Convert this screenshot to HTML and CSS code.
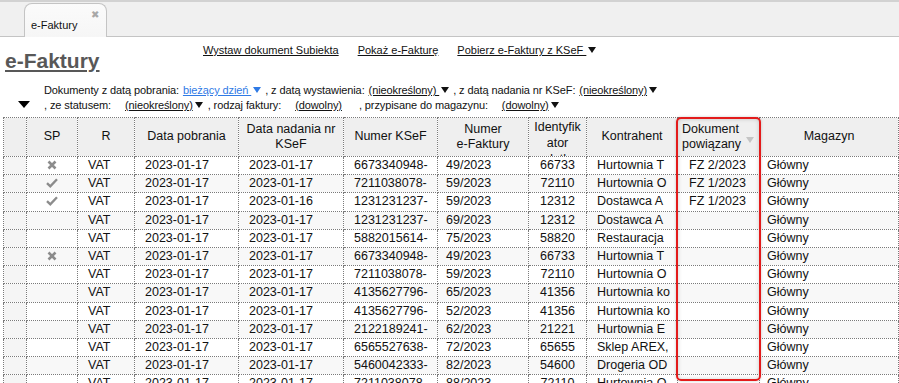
FILE: index.html
```html
<!DOCTYPE html>
<html lang="pl">
<head>
    <meta charset="UTF-8">
    <title>e-Faktury</title>
    <link rel="stylesheet" href="styles.css">
</head>
<body>
    <!-- Tab strip -->
    <div class="tabbar">
        <div class="tab">e-Faktury<span class="tab-close">&#x2716;</span></div>
    </div>

    <div class="page">
        <div class="top">
            <h1 class="title">e-Faktury</h1>
            <nav class="actions">
                <a href="#">Wystaw dokument Subiekta</a>
                <a href="#">Pokaż e-Fakturę</a>
                <a href="#">Pobierz e-Faktury z KSeF <span class="caret"></span></a>
            </nav>
        </div>

        <!-- Filters -->
        <div class="filters">
            <span class="toggle"></span>
            <div class="filter-lines">
                <div class="filter-line">
                    Dokumenty z datą pobrania: <a class="pick blue" href="#">bieżący dzień <span class="caret"></span></a>
                    , z datą wystawienia: <a class="pick" href="#">(nieokreślony) <span class="caret"></span></a>
                    , z datą nadania nr KSeF: <a class="pick" href="#">(nieokreślony)<span class="caret"></span></a>
                </div>
                <div class="filter-line">
                    , ze statusem: <a class="pick wide" href="#">(nieokreślony)<span class="caret"></span></a>
                    , rodzaj faktury: <a class="pick wide" href="#">(dowolny)</a>
                    <span class="spacer"></span>, przypisane do magazynu: <a class="pick wide" href="#">(dowolny)<span class="caret"></span></a>
                </div>
            </div>
        </div>

        <!-- Grid -->
        <div class="grid-wrap">
            <table class="grid">
                <colgroup>
                    <col style="width:23px">
                    <col style="width:51px">
                    <col style="width:57px">
                    <col style="width:104px">
                    <col style="width:105px">
                    <col style="width:94px">
                    <col style="width:91px">
                    <col style="width:58px">
                    <col style="width:91px">
                    <col style="width:82px">
                    <col>
                </colgroup>
                <thead>
                    <tr>
                        <th class="sel"></th>
                        <th><div class="hd">SP</div></th>
                        <th><div class="hd">R</div></th>
                        <th><div class="hd">Data pobrania</div></th>
                        <th><div class="hd">Data nadania nr KSeF</div></th>
                        <th><div class="hd">Numer KSeF</div></th>
                        <th><div class="hd">Numer<br>e-Faktury</div></th>
                        <th><div class="hd clip">Identyfik<br>ator<br>podatkowy</div></th>
                        <th><div class="hd">Kontrahent</div></th>
                        <th><div class="hd left">Dokument powiązany</div><span class="sort"></span></th>
                        <th><div class="hd">Magazyn</div></th>
                    </tr>
                </thead>
                <tbody id="rows"></tbody>
            </table>
            <div class="highlight"></div>
        </div>
    </div>

    <script>
        const X = '<svg class="ico" width="10" height="10" viewBox="0 0 10 10"><path d="M1.5 1.5 L8.5 8.5 M8.5 1.5 L1.5 8.5" stroke="#8c8c8c" stroke-width="2.6" fill="none"/></svg>';
        const OK = '<svg class="ico" width="12" height="10" viewBox="0 0 12 10"><path d="M1 5.2 L4.3 8.3 L11 1.2" stroke="#8c8c8c" stroke-width="2.4" fill="none"/></svg>';

        const data = [
            ['x', '2023-01-17', '6673340948-', '49/2023', '66733', 'Hurtownia T', 'FZ 2/2023'],
            ['v', '2023-01-17', '7211038078-', '59/2023', '72110', 'Hurtownia O', 'FZ 1/2023'],
            ['v', '2023-01-16', '1231231237-', '59/2023', '12312', 'Dostawca A', 'FZ 1/2023'],
            ['', '2023-01-17', '1231231237-', '69/2023', '12312', 'Dostawca A', ''],
            ['', '2023-01-17', '5882015614-', '75/2023', '58820', 'Restauracja', ''],
            ['x', '2023-01-17', '6673340948-', '49/2023', '66733', 'Hurtownia T', ''],
            ['', '2023-01-17', '7211038078-', '59/2023', '72110', 'Hurtownia O', ''],
            ['', '2023-01-17', '4135627796-', '65/2023', '41356', 'Hurtownia ko', ''],
            ['', '2023-01-17', '4135627796-', '52/2023', '41356', 'Hurtownia ko', ''],
            ['', '2023-01-17', '2122189241-', '62/2023', '21221', 'Hurtownia E', ''],
            ['', '2023-01-17', '6565527638-', '72/2023', '65655', 'Sklep AREX,', ''],
            ['', '2023-01-17', '5460042333-', '82/2023', '54600', 'Drogeria OD', ''],
            ['', '2023-01-17', '7211038078-', '88/2023', '72110', 'Hurtownia O', '']
        ];

        const tbody = document.getElementById('rows');
        data.forEach(r => {
            const sp = r[0] === 'x' ? X : (r[0] === 'v' ? OK : '');
            const tr = document.createElement('tr');
            tr.innerHTML =
                '<td class="sel"></td>' +
                '<td class="center">' + sp + '</td>' +
                '<td>VAT</td>' +
                '<td>2023-01-17</td>' +
                '<td>' + r[1] + '</td>' +
                '<td>' + r[2] + '</td>' +
                '<td class="num">' + r[3] + '</td>' +
                '<td class="center">' + r[4] + '</td>' +
                '<td>' + r[5] + '</td>' +
                '<td class="doc">' + r[6] + '</td>' +
                '<td class="mag">Główny</td>';
            tbody.appendChild(tr);
        });
    </script>
</body>
</html>
```

FILE: styles.css
```css
* {
    box-sizing: border-box;
}

body {
    margin: 0;
    background: #fff;
    font-family: 'Liberation Sans', Arial, sans-serif;
    color: #111;
    overflow: hidden;
}

a {
    color: #111;
}

/* Tab strip */
.tabbar {
    height: 37px;
    background: #f0f0f0;
    border-top: 2px solid #d2d2d2;
    border-bottom: 1px solid #c4c4c4;
    padding-left: 24px;
    display: flex;
    align-items: flex-end;
}

.tab {
    position: relative;
    width: 83px;
    height: 34px;
    margin-bottom: -1px;
    background: linear-gradient(#fbfbfb, #f6f6f6);
    border: 1px solid #c4c4c4;
    border-bottom: none;
    border-radius: 8px 8px 0 0;
    font-size: 11px;
    padding: 15px 0 0 6px;
}

.tab-close {
    position: absolute;
    right: 7px;
    top: 5px;
    font-size: 10px;
    color: #a8a8a8;
}

/* Title + actions */
.top {
    display: flex;
    align-items: flex-start;
    padding-top: 6px;
    height: 46px;
}

.title {
    margin: 6px 0 0 5px;
    width: 198px;
    font-size: 21px;
    line-height: 24px;
    font-weight: bold;
    color: #585858;
    text-decoration: underline;
    text-underline-offset: 2px;
}

.actions {
    display: flex;
    gap: 19px;
    font-size: 11px;
    line-height: 14px;
}

.caret {
    display: inline-block;
    width: 0;
    height: 0;
    border-left: 4.5px solid transparent;
    border-right: 4.5px solid transparent;
    border-top: 6px solid #111;
    margin-left: 2px;
    vertical-align: 1px;
}

/* Filters */
.filters {
    display: flex;
    align-items: flex-end;
    font-size: 11px;
    line-height: 15px;
}

.toggle {
    width: 0;
    height: 0;
    margin: 0 14px 5px 18px;
    border-left: 6.5px solid transparent;
    border-right: 6.5px solid transparent;
    border-top: 7px solid #000;
}

.filter-line {
    white-space: nowrap;
    letter-spacing: -0.1px;
}

.pick {
    margin: 0 1px;
}

.pick.wide {
    margin: 0 2px 0 11px;
}

.pick.blue {
    color: #2f7ae5;
}

.pick.blue .caret {
    border-top-color: #2f7ae5;
}

.spacer {
    display: inline-block;
    width: 12px;
}

/* Grid */
.grid-wrap {
    position: relative;
    margin: 4px 0 0 3px;
    width: 896px;
}

.grid {
    width: 896px;
    table-layout: fixed;
    border-collapse: collapse;
    font-size: 12.5px;
}

.grid th,
.grid td {
    border: 1px dotted #7a7a7a;
    padding: 0;
    white-space: nowrap;
    overflow: hidden;
}

.grid th {
    position: relative;
    height: 39px;
    background: #efefef;
    font-weight: normal;
    color: #111;
}

.hd {
    max-height: 38px;
    overflow: hidden;
    white-space: normal;
    line-height: 15.5px;
    text-align: center;
    padding: 0 3px;
}

.hd.clip {
    margin-top: 1px;
    line-height: 16px;
    max-height: 37px;
}

.hd.left {
    text-align: left;
    padding: 0 14px 0 4px;
}

.sort {
    position: absolute;
    right: 5px;
    top: 19px;
    width: 0;
    height: 0;
    border-left: 4px solid transparent;
    border-right: 4px solid transparent;
    border-top: 6px solid #c4c4c4;
}

.grid td {
    height: 18.2px;
    line-height: 17px;
    padding-left: 10px;
}

.grid tbody tr:nth-child(even) td {
    background: #f8f8f8;
}

.grid td.sel,
.grid tbody tr:nth-child(even) td.sel {
    background: #f5f5f5;
}

.grid td.center {
    padding-left: 0;
    text-align: center;
}

.grid td.num {
    padding-left: 8px;
}

.grid td.doc {
    padding-left: 11px;
}

.grid td.mag {
    padding-left: 7px;
}

.ico {
    vertical-align: -1px;
}

.highlight {
    position: absolute;
    left: 673px;
    top: 0;
    width: 85px;
    height: 264px;
    border: 2px solid #e31b1b;
    border-radius: 5px;
    box-shadow: inset 0 0 4px rgba(0, 0, 0, 0.18), 0 0 3px rgba(0, 0, 0, 0.2);
    pointer-events: none;
}
```
